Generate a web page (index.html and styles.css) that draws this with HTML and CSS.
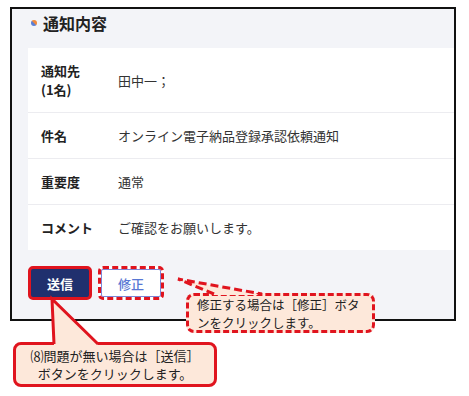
FILE: index.html
```html
<!DOCTYPE html>
<html lang="ja">

<head>
    <meta charset="UTF-8">
    <meta name="viewport" content="width=device-width, initial-scale=1.0">
    <title>通知内容</title>
    <link rel="stylesheet" href="styles.css">
</head>

<body>
    <div class="frame">
        <h2 class="section-title"><span class="dot"></span>通知内容</h2>
        <div class="card">
            <div class="row">
                <div class="label">通知先<br>(1名)</div>
                <div class="value">田中一；</div>
            </div>
            <div class="row">
                <div class="label">件名</div>
                <div class="value">オンライン電子納品登録承認依頼通知</div>
            </div>
            <div class="row">
                <div class="label">重要度</div>
                <div class="value">通常</div>
            </div>
            <div class="row">
                <div class="label">コメント</div>
                <div class="value">ご確認をお願いします。</div>
            </div>
        </div>
        <div class="actions">
            <button class="btn btn-send">送信</button>
            <button class="btn btn-edit">修正</button>
        </div>
    </div>

    <div class="note note-edit">修正する場合は［修正］ボタ<br>ンをクリックします。</div>
    <div class="note note-send">⑻問題が無い場合は［送信］<br>ボタンをクリックします。</div>

    <!-- annotation pointers -->
    <svg class="pointers" width="469" height="396" viewBox="0 0 469 396">
        <polygon points="178,279 262,295 214,295" fill="#fde8da" />
        <polyline points="214,294 178,279 262,294" fill="none" stroke="#e0141e" stroke-width="3"
            stroke-dasharray="8,4" />
        <polygon points="52,299 54,345 98,345" fill="#fde8da" />
        <polyline points="54,344 52,299 98,344" fill="none" stroke="#e0141e" stroke-width="3" />
    </svg>
</body>

</html>
```

FILE: styles.css
```css
body {
    margin: 0;
    padding: 0;
    background-color: #fff;
    font-family: "Noto Sans CJK JP", "Noto Sans", sans-serif;
    color: #222;
    width: 469px;
    height: 396px;
    position: relative;
    overflow: hidden;
}

.frame {
    margin: 7px 0 0 10px;
    border: 2px solid #111;
    background-color: #f3f4f8;
    padding: 0 0 0 16px;
    box-sizing: border-box;
    width: 446px;
    height: 314px;
    overflow: hidden;
}

.section-title {
    margin: 0;
    padding: 4px 0 15px 3px;
    font-size: 16px;
    line-height: 20px;
    font-weight: bold;
    color: #222;
    display: flex;
    align-items: center;
}

.dot {
    width: 6px;
    height: 6px;
    border-radius: 50%;
    background: linear-gradient(225deg, #f08a3c 0%, #f08a3c 45%, #5b7fd6 55%, #5b7fd6 100%);
    margin-right: 6px;
}

.card {
    background-color: #fff;
    margin-right: -4px;
}

.row {
    display: flex;
    align-items: center;
    padding: 13px 0 13px 13px;
    border-bottom: 1px solid #ececf0;
    font-size: 13px;
    line-height: 19px;
}

.row:last-child {
    border-bottom: none;
}

.label {
    width: 77px;
    font-weight: bold;
    color: #222;
    flex-shrink: 0;
}

.value {
    color: #333;
}

.actions {
    display: flex;
    gap: 6px;
    margin-top: 16px;
}

.btn {
    width: 64px;
    height: 34px;
    border-radius: 5px;
    font-family: "Noto Sans CJK JP", sans-serif;
    font-size: 13px;
    font-weight: bold;
    padding: 0;
    box-sizing: border-box;
}

.btn-send {
    background-color: #20306e;
    color: #fff;
    border: 3px solid #e0141e;
}

.btn-edit {
    width: 66px;
    background-color: #fff;
    color: #5877d4;
    font-weight: 500;
    border: 3px dashed #e0141e;
    box-shadow: inset 0 0 0 1px #7d86d6;
}

.pointers {
    position: absolute;
    left: 0;
    top: 0;
    pointer-events: none;
}

.note {
    position: absolute;
    background-color: #fde8da;
    border: 3px solid #e0141e;
    border-radius: 8px;
    font-size: 12.5px;
    line-height: 18px;
    color: #222;
    box-sizing: border-box;
}

.note-edit {
    left: 186px;
    top: 293px;
    width: 189px;
    height: 40px;
    border-style: dashed;
    padding: 0 0 0 8px;
}

.note-send {
    left: 13px;
    top: 342px;
    width: 204px;
    height: 45px;
    padding-top: 2px;
    font-size: 13px;
    text-align: center;
}
```
